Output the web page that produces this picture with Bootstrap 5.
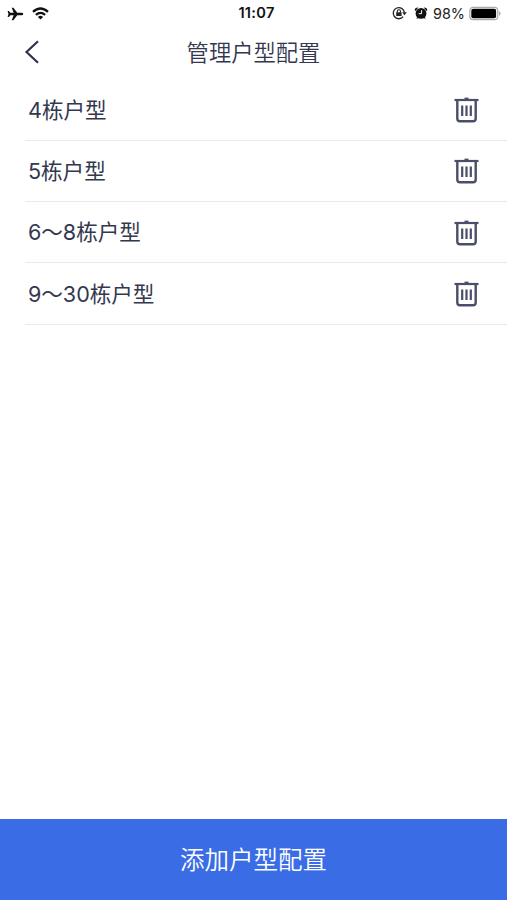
<!DOCTYPE html>
<html lang="zh-CN">
<head>
<meta charset="utf-8">
<meta name="viewport" content="width=device-width, initial-scale=1">
<title>管理户型配置</title>
<link href="https://cdn.jsdelivr.net/npm/bootstrap@5.3.0/dist/css/bootstrap.min.css" rel="stylesheet">
<style>
  body { font-family: Inter, "Noto Sans CJK SC", sans-serif; color: #34384f; background: #fff; }
  svg { display: block; flex: none; }
  .status-bar { height: 27px; padding: 0 6px 0 7px; color: #111; display: grid; grid-template-columns: 1fr auto 1fr; }
  .clock { font-size: 14.6px; font-weight: 600; letter-spacing: .3px; padding-left: 5px; padding-top: 1.5px; }
  .battery-text { font-size: 14.4px; color: #222; margin-left: 5px; margin-right: 4px; }
  .alarm { margin-left: 7px; }
  .title-bar { height: 52.5px; padding: 0 24px; display: grid; grid-template-columns: 1fr auto 1fr; }
  .title-bar h1 { font-size: 22.3px; line-height: 32px; font-weight: 350; }
  .title-bar a { margin-top: -2px; }
  .plans { margin-left: 25px; --bs-border-color: #e9e9eb; }
  .plans .list-group-item { height: 61.3px; padding: .9px 28px 0 3px; font-size: 21.6px; font-weight: 380; color: inherit; }
  .plans .list-group-item span { letter-spacing: -.06px; }
  .add-btn { height: 81px; font-size: 24.5px; font-weight: 350; }
  .add-btn, .add-btn:hover, .add-btn:active { background: #3a6ce5; color: #fff; }
  .add-btn span { position: relative; top: 1px; }
</style>
<script src="https://cdn.jsdelivr.net/npm/bootstrap@5.3.0/dist/js/bootstrap.bundle.min.js"></script>
</head>
<body>
<svg width="0" height="0" class="position-absolute" aria-hidden="true">
  <symbol id="trash" viewBox="0 0 25 28">
    <g fill="none" stroke="#4a4e6b">
      <path d="M.5 4H24.500" stroke-width="2.200"/>
      <path d="M10.500 2.500H14.500" stroke-width="1.800"/>
      <path d="M3.300 4V22.600Q3.300 25.300 6 25.300H19Q21.700 25.300 21.700 22.600V4" stroke-width="2.400"/>
      <path d="M8.200 9.500V20M12.500 9.500V20M16.800 9.500V20" stroke-width="2.200"/>
    </g>
  </symbol>
</svg>
<div class="d-flex flex-column vh-100">
  <div class="status-bar align-items-center">
    <div class="d-flex align-items-center">
      <svg width="17" height="14" viewBox="0 0 17 14"><path fill="#111" d="M16.300 7Q16.300 8.200 14.500 8.200H10.300L6.400 13.300H4.700L6.700 8.200H3.400L1.800 9.900H.6L1.500 7 .6 4.100H1.800L3.400 5.800H6.700L4.700.7H6.400L10.300 5.800H14.500Q16.300 5.800 16.300 7Z"/></svg>
      <svg class="ms-2" width="17" height="13" viewBox="0 0 17 13"><g fill="none" stroke="#111" stroke-width="2.300"><path d="M1 4.900Q8.500-1.900 16 4.900"/><path d="M3.900 7.900Q8.500 3.800 13.100 7.900"/></g><path fill="#111" d="M5.900 9.900Q8.500 7.700 11.100 9.900L8.500 12.600Z"/></svg>
    </div>
    <div class="clock">11:07</div>
    <div class="d-flex align-items-center justify-content-end">
      <svg width="15" height="14" viewBox="0 0 15 14"><path d="M11.200 10.700A5.600 5.600 0 1 1 12.400 6.400" fill="none" stroke="#222" stroke-width="1.300"/><path fill="#222" d="M10.200 6.200H14.800L12.500 9.200ZM4.200 6.300H9.600V10.100H4.200Z"/><path d="M5.300 6.500V5.200Q5.300 3.700 6.900 3.700T8.500 5.200V6.500" fill="none" stroke="#222" stroke-width="1.100"/></svg>
      <svg class="alarm" width="14" height="14" viewBox="0 0 14 14"><g fill="#111"><circle cx="7" cy="7.400" r="5.400"/><path d="M.7 4.200Q.7 1.300 4.300 1.400L1.500 5ZM13.300 4.200Q13.300 1.300 9.700 1.400L12.500 5ZM2.300 12.800 3.600 10.500 5 12ZM11.700 12.800 10.400 10.500 9 12Z"/></g><path d="M7.600 4.200V7.700H4.700" fill="none" stroke="#fff" stroke-width="1"/></svg>
      <span class="battery-text">98%</span>
      <svg width="32" height="15" viewBox="0 0 32 15"><rect x=".8" y="1.300" width="28" height="12.400" rx="3.400" fill="#fff" stroke="#aaa" stroke-width="1.200"/><rect x="2.300" y="2.800" width="24.800" height="9.400" rx="2" fill="#000"/><path d="M30 5.300Q31.600 6 31.600 7.500T30 9.700Z" fill="#aaa"/></svg>
    </div>
  </div>
  <header class="title-bar align-items-center">
    <a href="#" aria-label="返回"><svg width="16" height="26" viewBox="0 0 16 26"><path d="M14 2.200 2.500 13 14 23.800" fill="none" stroke="#30324e" stroke-width="2.200"/></svg></a>
    <h1 class="m-0">管理户型配置</h1>
  </header>
  <main class="flex-grow-1">
    <ul class="list-group list-group-flush plans">
      <li class="list-group-item d-flex align-items-center justify-content-between border-bottom"><span>4栋户型</span><svg width="25" height="28"><use href="#trash"/></svg></li>
      <li class="list-group-item d-flex align-items-center justify-content-between border-bottom"><span>5栋户型</span><svg width="25" height="28"><use href="#trash"/></svg></li>
      <li class="list-group-item d-flex align-items-center justify-content-between border-bottom"><span>6～8栋户型</span><svg width="25" height="28"><use href="#trash"/></svg></li>
      <li class="list-group-item d-flex align-items-center justify-content-between border-bottom"><span>9～30栋户型</span><svg width="25" height="28"><use href="#trash"/></svg></li>
    </ul>
  </main>
  <button type="button" class="btn add-btn w-100 rounded-0 border-0 p-0"><span>添加户型配置</span></button>
</div>
</body>
</html>
